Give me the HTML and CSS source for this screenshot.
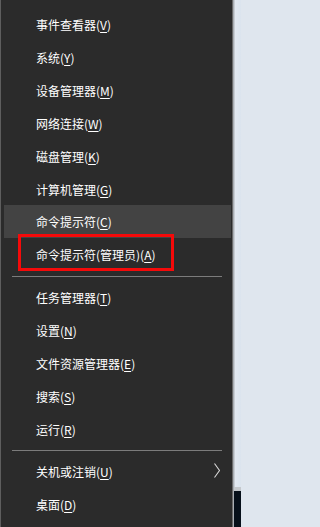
FILE: index.html
```html
<!DOCTYPE html>
<html lang="zh-CN">
<head>
<meta charset="utf-8">
<title>Win+X 菜单</title>
<link rel="stylesheet" href="styles.css">
</head>
<body>
<div class="screen">
  <div class="menu">
    <div class="item">事件查看器(<u>V</u>)</div>
    <div class="item">系统(<u>Y</u>)</div>
    <div class="item">设备管理器(<u>M</u>)</div>
    <div class="item">网络连接(<u>W</u>)</div>
    <div class="item">磁盘管理(<u>K</u>)</div>
    <div class="item">计算机管理(<u>G</u>)</div>
    <div class="item hover">命令提示符(<u>C</u>)</div>
    <div class="item marked">命令提示符(管理员)(<u>A</u>)<span class="redbox"></span></div>
    <div class="sep"></div>
    <div class="item">任务管理器(<u>T</u>)</div>
    <div class="item">设置(<u>N</u>)</div>
    <div class="item">文件资源管理器(<u>E</u>)</div>
    <div class="item">搜索(<u>S</u>)</div>
    <div class="item">运行(<u>R</u>)</div>
    <div class="sep"></div>
    <div class="item sub">关机或注销(<u>U</u>)
      <svg class="chev" width="6" height="15" viewBox="0 0 6 15"><polyline points="0.5,0.5 5.5,7.5 0.5,14.5" fill="none" stroke="#d8d8d8" stroke-width="1.1"/></svg>
    </div>
    <div class="item">桌面(<u>D</u>)</div>
  </div>
  <div class="side">
    <div class="side-light"></div>
    <div class="side-band"></div>
    <div class="side-dark"></div>
  </div>
</div>
</body>
</html>
```

FILE: styles.css
```css
html, body {
  margin: 0;
  padding: 0;
}
body {
  width: 241px;
  height: 527px;
  overflow: hidden;
  background: #dfe6ee;
  font-family: "Noto Sans CJK SC", "Microsoft YaHei", sans-serif;
}
.screen {
  display: flex;
  height: 527px;
}
.menu {
  width: 231px;
  flex: none;
  background: #2b2b2b;
  border-left: 1px solid #5e5e5e;
  border-right: 1px solid #6a6a6a;
  padding-top: 8px;
  box-sizing: content-box;
  display: flex;
  flex-direction: column;
}
.item {
  position: relative;
  height: 33px;
  line-height: 33px;
  padding-left: 35px;
  font-size: 12px;
  color: #ffffff;
  white-space: nowrap;
}
.item u {
  text-decoration-thickness: 1px;
  text-underline-offset: 2px;
}
.item.hover {
  background: #434343;
  margin: -1px 1px 1px 3px;
  padding-left: 32px;
}
.item.marked {
  margin-top: -1px;
  height: 34px;
}
.redbox {
  position: absolute;
  left: 17px;
  top: -4px;
  width: 150px;
  height: 31px;
  border: 3px solid #f50a0a;
}
.sep {
  height: 1px;
  background: #7c7c7c;
  margin: 4px 10px 4px 11px;
}
.item.sub {
  display: flex;
  align-items: center;
}
.chev {
  position: absolute;
  left: 213px;
  top: 8px;
}
.side {
  flex: 1;
  display: flex;
  flex-direction: column;
  border-left: 1px solid #a9aeb4;
}
.side-light {
  height: 487px;
  background: linear-gradient(90deg, #c9ced4 0px, #c9ced4 1px, #e3e9f1 1px, #dbe4ee 100%);
}
.side-band {
  height: 4px;
  background: #c4c8cc;
}
.side-dark {
  flex: 1;
  background: #07101a;
}
```
